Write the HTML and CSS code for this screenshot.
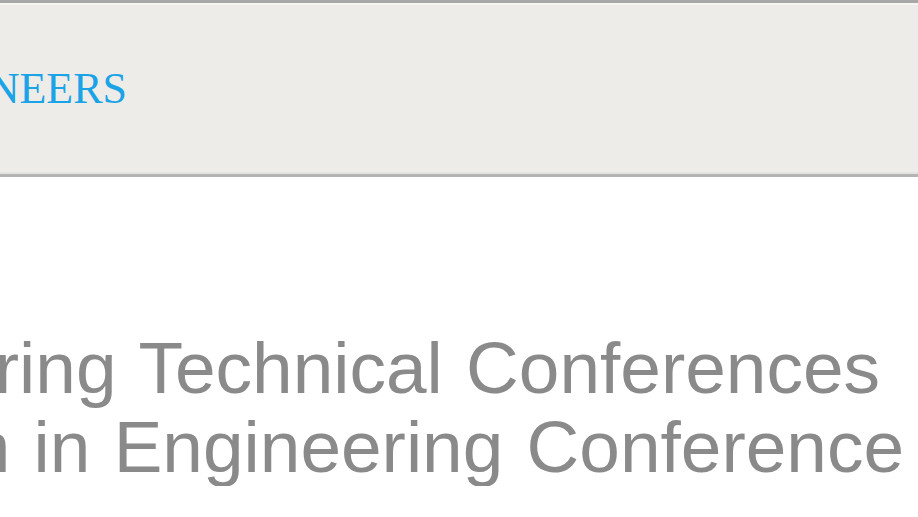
FILE: index.html
```html
<!DOCTYPE html>
<html>
<head>
<meta charset="utf-8">
<link rel="stylesheet" href="styles.css">
</head>
<body>
<header class="banner">
  <div class="brand"><span class="brand-text">AMERICAN SOCIETY OF MECHANICAL ENGINEERS</span></div>
</header>
<main class="content">
  <h1 class="title">
    <span class="line line-1">Design Engineering Technical Conferences</span>
    <span class="line line-2">Computers and Information in Engineering Conference</span>
  </h1>
</main>
</body>
</html>
```
FILE: styles.css
```css
html, body {
  margin: 0;
  padding: 0;
  background: #ffffff;
  overflow: hidden;
}
.banner {
  height: 171px;
  background: #eeece8;
  border-top: 3px solid #a8a8a8;
  border-bottom: 3px solid #b4b4b2;
  box-shadow: inset 0 2px 0 #f6f5f2, inset 0 -2px 0 #e4e3df;
  display: flex;
  align-items: flex-start;
}
.brand {
  width: 127px;
  display: flex;
  justify-content: flex-end;
  padding-top: 62px;
}
.brand-text {
  white-space: nowrap;
  font-family: "Liberation Serif", "Times New Roman", serif;
  font-size: 44px;
  line-height: 48px;
  color: #1aa3e6;
}
.content {
  padding-top: 151px;
}
.title {
  margin: 0;
  width: 904px;
  display: flex;
  flex-direction: column;
  align-items: flex-end;
  font-family: "Liberation Sans", Arial, sans-serif;
  font-weight: normal;
  font-size: 73px;
  line-height: 79px;
  word-spacing: 3px;
  color: #8a8a8a;
}
.line {
  white-space: nowrap;
}
.line-1 {
  padding-right: 24px;
}
```
